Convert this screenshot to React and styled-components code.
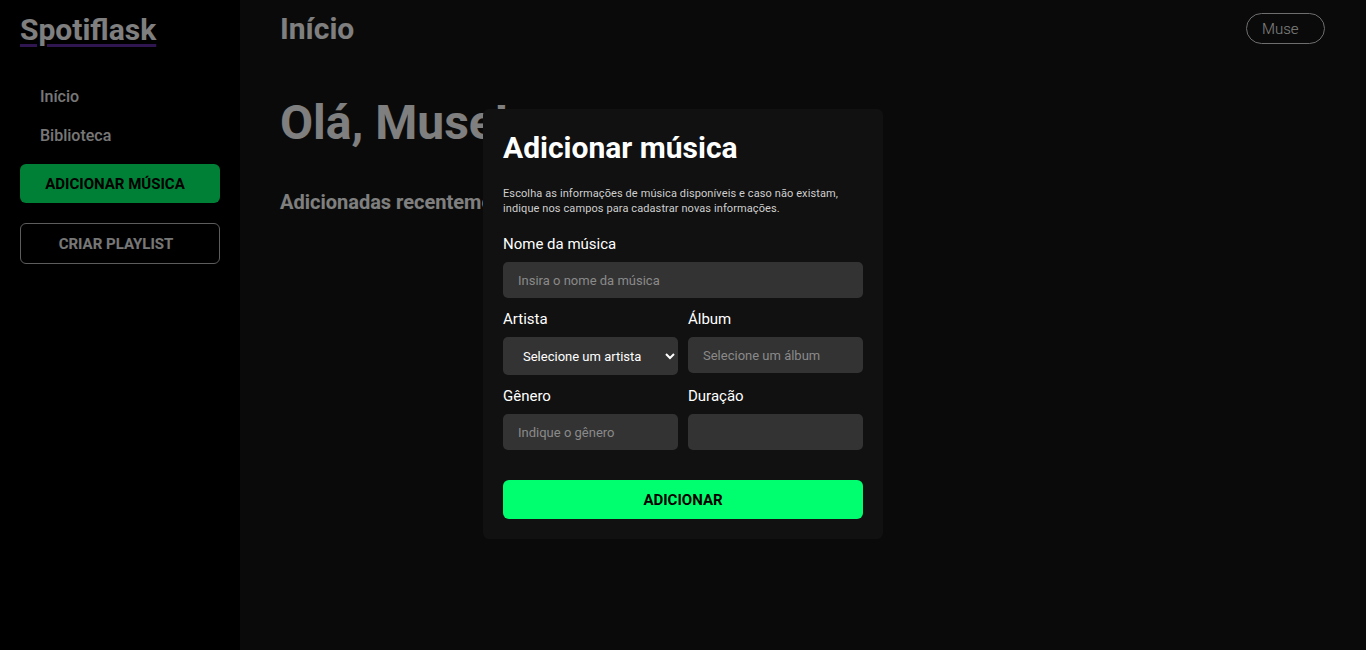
import React from 'react';
import styled, { createGlobalStyle } from 'styled-components';

const GlobalStyle = createGlobalStyle`
  * { box-sizing: border-box; }
  body {
    margin: 0;
    background: #141414;
    font-family: Roboto, "Noto Sans", Arial, sans-serif;
    color: #fff;
  }
`;

const Layout = styled.div`
  display: flex;
  height: 650px;
  overflow: hidden;
`;

const Sidebar = styled.aside`
  width: 240px;
  flex-shrink: 0;
  background: #000;
  padding: 12px 20px 20px;
  display: flex;
  flex-direction: column;
`;

const Logo = styled.h1`
  margin: 0;
  font-size: 30px;
  font-weight: 700;
  line-height: 36px;
  color: #fff;
  text-decoration: underline;
  text-decoration-color: #5e2ca0;
  text-decoration-thickness: 3px;
  text-underline-offset: 4px;
`;

const Nav = styled.nav`
  display: flex;
  flex-direction: column;
  gap: 20px;
  padding: 39px 20px 19px;
`;

const NavLink = styled.a`
  font-size: 16px;
  font-weight: 500;
  color: #eee;
  text-decoration: none;
  line-height: 19px;
`;

const SideButton = styled.button`
  width: 200px;
  height: ${(p) => (p.$outline ? '41px' : '39px')};
  margin-bottom: 20px;
  padding: ${(p) => (p.$outline ? '0 8px 0 0' : '0 10px 0 0')};
  border-radius: 6px;
  border: ${(p) => (p.$outline ? '1px solid #bbb' : 'none')};
  background: ${(p) => (p.$outline ? 'transparent' : '#00ff6e')};
  color: ${(p) => (p.$outline ? '#eee' : '#000')};
  font-family: inherit;
  font-size: 15px;
  font-weight: 700;
  text-transform: uppercase;
  cursor: pointer;
`;

const Main = styled.main`
  flex: 1;
  background: #141414;
  padding: 11px 41px 0 40px;
`;

const Header = styled.header`
  display: flex;
  justify-content: space-between;
  align-items: flex-start;
`;

const PageTitle = styled.h2`
  margin: 0;
  font-size: 30px;
  font-weight: 700;
  line-height: 36px;
  color: #fff;
`;

const UserPill = styled.div`
  width: 79px;
  height: 31px;
  margin-top: 2px;
  border: 1px solid #ddd;
  border-radius: 16px;
  padding-left: 15px;
  display: flex;
  align-items: center;
  font-size: 15px;
  font-weight: 300;
  color: #fff;
`;

const Greeting = styled.h3`
  margin: 48px 0 0;
  font-size: 48px;
  font-weight: 700;
  line-height: 56px;
  color: #fff;
`;

const SectionTitle = styled.h4`
  margin: 39px 0 0;
  font-size: 20px;
  font-weight: 700;
  color: #fff;
`;

const Overlay = styled.div`
  position: fixed;
  inset: 0;
  background: rgba(0, 0, 0, 0.5);
`;

const Modal = styled.form`
  position: fixed;
  left: 483px;
  top: 109px;
  width: 400px;
  background: #111;
  border-radius: 6px;
  padding: 20px;
`;

const ModalTitle = styled.h2`
  margin: 0;
  font-size: 30px;
  font-weight: 700;
  line-height: 38px;
  color: #fff;
`;

const Description = styled.p`
  margin: 19px 0 19px;
  font-size: 11px;
  line-height: 15px;
  color: #cfcfcf;
  letter-spacing: 0.1px;
`;

const Row = styled.div`
  display: grid;
  grid-template-columns: minmax(0, 1fr) minmax(0, 1fr);
  gap: 10px;
`;

const Field = styled.div`
  display: flex;
  flex-direction: column;
  min-width: 0;
  margin-bottom: ${(p) => p.$mb || '12px'};
`;

const Label = styled.label`
  font-size: 15px;
  line-height: 18px;
  color: #fff;
  margin-bottom: 9px;
`;

const Input = styled.input`
  width: 100%;
  min-width: 0;
  height: 36px;
  border: none;
  border-radius: 5px;
  background: #333;
  padding: 0 15px;
  font-family: inherit;
  font-size: 13px;
  color: #fff;
  outline: none;
  &::placeholder { color: #8a8a8a; }
`;

const Select = styled.select`
  width: 100%;
  min-width: 0;
  height: 38px;
  border: none;
  border-radius: 5px;
  background: #333;
  padding: 0 8px 0 16px;
  font-family: inherit;
  font-size: 13px;
  color: #fff;
  outline: none;
`;

const SubmitButton = styled.button`
  width: 100%;
  height: 39px;
  margin-top: 30px;
  border: none;
  border-radius: 6px;
  background: #00ff6e;
  color: #000;
  font-family: inherit;
  font-size: 15px;
  font-weight: 700;
  text-transform: uppercase;
`;

export default function App() {
  return (
    <>
      <GlobalStyle />
      <Layout>
        <Sidebar>
          <Logo>Spotiflask</Logo>
          <Nav>
            <NavLink href="#">Início</NavLink>
            <NavLink href="#">Biblioteca</NavLink>
          </Nav>
          <SideButton>Adicionar música</SideButton>
          <SideButton $outline>Criar playlist</SideButton>
        </Sidebar>
        <Main>
          <Header>
            <PageTitle>Início</PageTitle>
            <UserPill>Muse</UserPill>
          </Header>
          <Greeting>Olá, Muse!</Greeting>
          <SectionTitle>Adicionadas recentemente</SectionTitle>
        </Main>
      </Layout>
      <Overlay />
      <Modal onSubmit={(e) => e.preventDefault()}>
        <ModalTitle>Adicionar música</ModalTitle>
        <Description>
          Escolha as informações de música disponíveis e caso não existam, indique nos campos para cadastrar novas informações.
        </Description>
        <Field>
          <Label>Nome da música</Label>
          <Input placeholder="Insira o nome da música" />
        </Field>
        <Row>
          <Field>
            <Label>Artista</Label>
            <Select defaultValue="">
              <option value="">Selecione um artista</option>
            </Select>
          </Field>
          <Field>
            <Label>Álbum</Label>
            <Input placeholder="Selecione um álbum" />
          </Field>
        </Row>
        <Row>
          <Field $mb="0">
            <Label>Gênero</Label>
            <Input placeholder="Indique o gênero" />
          </Field>
          <Field $mb="0">
            <Label>Duração</Label>
            <Input />
          </Field>
        </Row>
        <SubmitButton type="submit">Adicionar</SubmitButton>
      </Modal>
    </>
  );
}
